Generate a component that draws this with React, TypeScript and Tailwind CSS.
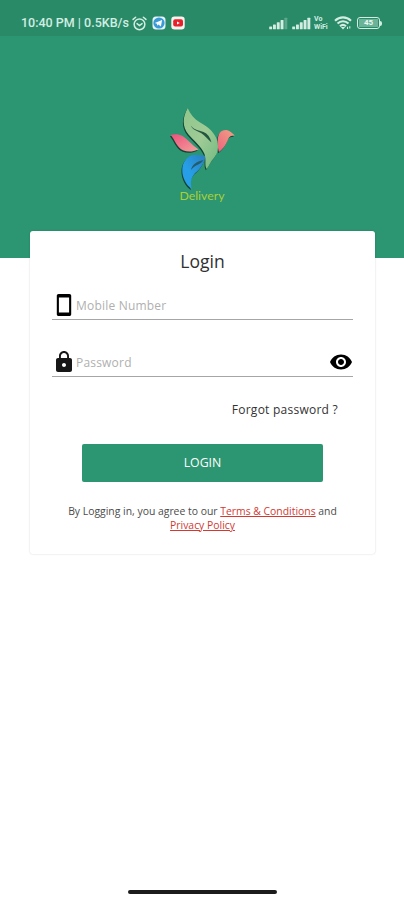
import React from 'react';

const SignalIcon: React.FC<{ bars: number; width: number }> = ({ bars, width }) => (
  <svg width={width} height="13" viewBox={`0 0 ${width} 13`} fill="#d3ede2">
    {[0, 1, 2, 3, 4].map((i) => (
      <rect
        key={i}
        x={i * (width / 5) + 0.2}
        y={9.6 - i * 2.2}
        width="2.9"
        height={2.6 + i * 2.2}
        rx="0.5"
        opacity={i < bars ? 1 : 0.3}
      />
    ))}
  </svg>
);

const AlarmIcon = () => (
  <svg width="15" height="15" viewBox="0 0 14 14" fill="none" stroke="#d3ede2" strokeWidth="1.4" strokeLinecap="round">
    <circle cx="7" cy="7.8" r="5" />
    <path d="M1 3.2 3.4 1.2M13 3.2l-2.4-2M4.7 7.1 7 8.9l2.4-1.8" />
  </svg>
);

const TelegramIcon = () => (
  <svg width="14" height="14" viewBox="0 0 14 14">
    <rect x="0.5" y="0.5" width="13" height="13" rx="3.5" fill="#e6f3fb" />
    <circle cx="7" cy="7" r="5.6" fill="#3a9ad6" />
    <path d="m2.8 7 7.3-3-1.2 6.4-2.5-1.8-1.2 1.2-.2-2.1z" fill="#fff" />
  </svg>
);

const YoutubeIcon = () => (
  <svg width="14" height="14" viewBox="0 0 14 14">
    <rect x="0.3" y="0.5" width="13.4" height="13" rx="3.2" fill="#f8f3ee" />
    <rect x="2.2" y="3.2" width="9.8" height="7.4" rx="2" fill="#e5222b" />
    <path d="m6 5.4 2.8 1.5L6 8.5z" fill="#fff" />
  </svg>
);

const WifiIcon = () => (
  <svg width="18" height="14" viewBox="0 0 18 14" fill="none" stroke="#d3ede2" strokeWidth="2.1">
    <path d="M1 4.700c4.600-4.400 11.400-4.400 16 0M3.500 7.600c3.200-3.100 7.800-3.100 11 0M6 10.300c1.800-1.700 4.200-1.700 6 0" />
    <path d="m6.800 11 2.200 2.600 2.200-2.600z" fill="#d3ede2" stroke="none" />
    <path d="M13.500 13v-2.200M15.800 10.300v2.200" strokeWidth="1.1" />
  </svg>
);

const BatteryIcon = () => (
  <div className="flex items-center">
    <div className="flex h-[12px] w-[23px] items-center justify-center rounded-[3px] border-[1.5px] border-[#d3ede2] p-px">
      <div className="flex h-full w-full items-center justify-center bg-[#d3ede2]/40 text-[8px] leading-none font-bold text-[#e8f7f0]">
        45
      </div>
    </div>
    <div className="h-[5px] w-[2px] rounded-r-sm bg-[#d3ede2]" />
  </div>
);

const StatusBar = () => (
  <div className="flex h-9 items-center bg-[#298a68] pt-[10px] pr-[22px] pl-[21px] font-[Roboto,sans-serif] text-[#d3ede2]">
    <span className="w-[111px] text-[12.5px] font-medium whitespace-nowrap">10:40 PM | 0.5KB/s</span>
    <AlarmIcon />
    <div className="ml-[5px] flex gap-[5px]">
      <TelegramIcon />
      <YoutubeIcon />
    </div>
    <div className="ml-auto flex items-center">
      <SignalIcon bars={4} width={19} />
      <div className="ml-[4px]">
        <SignalIcon bars={5} width={19} />
      </div>
      <div className="ml-[3px] flex w-[16px] flex-col gap-px text-[7px] font-bold">
        <div className="h-[7px] leading-[7px]">Vo</div>
        <div className="h-[7px] leading-[7px]">WiFi</div>
      </div>
      <div className="mr-[5px] ml-[4px]">
        <WifiIcon />
      </div>
      <BatteryIcon />
    </div>
  </div>
);

const BirdLogo = () => (
  <svg width="72" height="88" viewBox="0 0 72 88">
    <defs>
      <linearGradient id="wing" x1="0" y1="0" x2="1" y2="1">
        <stop offset="0" stopColor="#8fc68c" />
        <stop offset="0.5" stopColor="#a0cb96" />
        <stop offset="1" stopColor="#6fba80" />
      </linearGradient>
      <linearGradient id="petal" x1="0" y1="0" x2="1" y2="1">
        <stop offset="0" stopColor="#ee4f7c" />
        <stop offset="1" stopColor="#f2a39b" />
      </linearGradient>
      <linearGradient id="head" x1="1" y1="0" x2="0" y2="1">
        <stop offset="0" stopColor="#f3a184" />
        <stop offset="1" stopColor="#e9647f" />
      </linearGradient>
      <linearGradient id="tail" x1="1" y1="0" x2="0" y2="1">
        <stop offset="0" stopColor="#2a7fc0" />
        <stop offset="0.6" stopColor="#279fe8" />
      </linearGradient>
      <g id="bird">
        <path d="M4.700 30C8 28.800 13 29 16.500 31c5 3 9 8.500 16 13.500-5 2.200-10.500 2.700-15 1C10.500 42.500 9 35 4.700 30z" fill="url(#petal)" />
        <path d="M53 47c-1.500-5-2.200-13 0-18 1.500-3 5-4.500 8.500-3.800 2.500.5 4 2.500 7.300 5.300-3.300-.2-5.300.8-6.300 3-2 4.500-4 9.500-9.500 13.500z" fill="url(#head)" />
        <path d="M39.500 51c-4.500-.8-10-1.500-14.500-.5-5 2-8.500 8-8.700 13.500-.5 8.500 4 16 9.400 20-1.700-6.500-.7-11 3.300-15.700C34 64 38.500 59 39.500 51z" fill="url(#tail)" />
        <path d="M21.700 3.300c2.800 6 6.300 10.700 12 14C43 22.500 49 28 51.300 36c1.500 6.500.7 12-3.300 17-3.500 4-4.500 7-7.300 11-2.500-3.500-.2-9-2.200-15C35.500 41.500 27 35 22.500 29.500 16 21.500 16.500 12 21.700 3.300z" fill="url(#wing)" />
      </g>
    </defs>
    <use href="#bird" transform="translate(-0.8 1.2)" className="brightness-0" opacity="0.55" />
    <use href="#bird" />
    <path d="M24.800 20.500c1.700 4.500 6.200 5 10.200 7.500s6 5.500 10.500 9.500c-1.500-5.500-4-9-8-10.500-4-1.700-9-1.500-12.700-6.500z" fill="#24553f" />
    <path d="M25 65c1-5 5-8.500 12.500-10-2.500 4.500-8.500 4.500-12.500 10z" fill="#245c6a" />
  </svg>
);

const PhoneIcon = () => (
  <svg width="24" height="24" viewBox="0 0 24 24">
    <path fillRule="evenodd" d="M6.600 1h10.800c1 0 1.800.8 1.800 1.800v18.400c0 1-.8 1.800-1.800 1.800H6.600c-1 0-1.800-.8-1.800-1.800V2.800C4.800 1.800 5.600 1 6.600 1zm.3 3.500v15h10.200v-15z" />
  </svg>
);

const LockIcon = () => (
  <svg width="24" height="24" viewBox="0 0 24 24" fill="#171717">
    <path d="M18 8h-1V6c0-2.760-2.240-5-5-5S7 3.240 7 6v2H6c-1.100 0-2 .9-2 2v10c0 1.100.9 2 2 2h12c1.100 0 2-.9 2-2V10c0-1.100-.9-2-2-2zm-6 9c-1.100 0-2-.9-2-2s.9-2 2-2 2 .9 2 2-.9 2-2 2zm3.100-9H8.900V6c0-1.710 1.390-3.100 3.100-3.100s3.100 1.390 3.100 3.100v2z" />
  </svg>
);

const EyeIcon = () => (
  <svg width="24" height="24" viewBox="0 0 24 24">
    <path d="M12 4.500C7 4.500 2.730 7.610 1 12c1.730 4.390 6 7.500 11 7.500s9.270-3.110 11-7.500c-1.730-4.390-6-7.500-11-7.500zM12 17c-2.760 0-5-2.240-5-5s2.240-5 5-5 5 2.240 5 5-2.240 5-5 5zm0-8c-1.660 0-3 1.340-3 3s1.340 3 3 3 3-1.340 3-3-1.340-3-3-3z" />
  </svg>
);

type FieldProps = {
  label: string;
  icon: React.ReactNode;
  action?: React.ReactNode;
};

const Field: React.FC<FieldProps> = ({ label, icon, action }) => (
  <div className="flex h-[30px] items-center border-b-[1.5px] border-[#a6a6a6]">
    {icon}
    <span className="pt-[2px] text-[12px] tracking-[0.2px] text-[#b0b0b0]">{label}</span>
    {action && <div className="ml-auto">{action}</div>}
  </div>
);

const App: React.FC = () => {
  return (
    <div className="flex h-[900px] w-[404px] flex-col bg-white font-['Open_Sans',sans-serif]">
      {/* Green header with logo */}
      <div className="h-[258px] shrink-0 bg-[#2c9571]">
        <StatusBar />
        <div className="flex flex-col items-center pt-[69px]">
          <BirdLogo />
          <span className="-mt-1 font-[Lato,sans-serif] text-[12.3px] leading-[14px] text-[#a8cf3a]">Delivery</span>
        </div>
      </div>

      {/* Login card */}
      <div className="relative -mt-[27px] ml-[30px] h-[323px] w-[345px] shrink-0 rounded-[3px] bg-white px-[22px] pt-[17px] shadow-[0_0_2px_rgba(0,0,0,0.18)]">
        <h1 className="text-center text-[17.5px] leading-[26px] text-[#303030]">Login</h1>
        <div className="mt-[16px] flex flex-col gap-[27px]">
          <Field label="Mobile Number" icon={<PhoneIcon />} />
          <Field label="Password" icon={<LockIcon />} action={<EyeIcon />} />
        </div>
        <div className="mt-[23px] pr-[15px] text-right text-[12px] leading-[20px] tracking-[0.25px] text-[#333]">
          Forgot password ?
        </div>
        <button className="mx-auto mt-[24px] block h-[38px] w-[241px] rounded-[2px] bg-[#2c9571] text-[12.3px] text-white">
          LOGIN
        </button>
        <p className="-mx-2 mt-[22px] text-center text-[10.4px] leading-[14px] text-[#4b4b4b]">
          By Logging in, you agree to our{' '}
          <a className="text-[#d03a32] underline">Terms &amp; Conditions</a> and
          <br />
          <a className="text-[#d03a32] underline">Privacy Policy</a>
        </p>
      </div>

      {/* Gesture bar */}
      <div className="mx-auto mt-auto mb-[6px] h-[4px] w-[149px] rounded-full bg-[#1c1c1c]" />
    </div>
  );
};

export default App;
